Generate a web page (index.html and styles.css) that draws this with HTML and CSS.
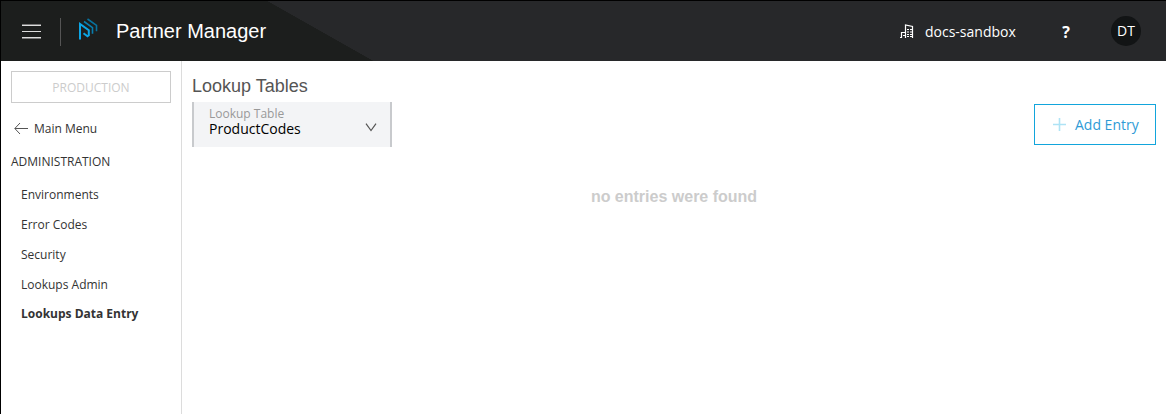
FILE: index.html
```html
<!DOCTYPE html>
<html lang="en">
<head>
<meta charset="utf-8">
<title>Partner Manager</title>
<link rel="stylesheet" href="styles.css">
</head>
<body>
<div class="app">
  <header class="header">
    <svg class="menu" width="19" height="15" viewBox="0 0 19 15" shape-rendering="crispEdges"><path d="M0 0h19v1H0zM0 7h19v1H0zM0 14h19v1H0z" fill="#777"/><path d="M0 1h19v1H0zM0 7h19v1H0zM0 13h19v1H0z" fill="#ddd"/></svg>
    <span class="divider"></span>
    <svg class="logo" width="20" height="23" viewBox="0 0 20 23" fill="none" stroke-width="1.6"><path d="M2 21.500V6L10.800 12.300V17.300L9.500 18.200 5.500 15.200" stroke="#0ca5e5" stroke-width="2"/><path d="M6 3.500l8.500 6.200v6" stroke="#087eae"/><path d="M9.500 1l9 6.400v5.800" stroke="#08729e"/></svg>
    <h1 class="brand">Partner Manager</h1>
    <svg class="building" width="14" height="15" viewBox="0 0 14 15" fill="none" stroke="#fff"><path d="M1.500 14V8.500H5M5.500 14V1L12.500 2.500V14M0 13.500H2" stroke-width="1.200"/><path d="M7 5.500h2M10 5.500h2M7 8h2M10 8h2M7 10.500h2M10 10.500h2M3 11.500h2M7 12.500h2M10 12.500h2"/></svg>
    <span class="org">docs-sandbox</span>
    <span class="help">?</span>
    <span class="avatar">DT</span>
  </header>
  <div class="body">
    <nav class="sidebar">
      <div class="environment">PRODUCTION</div>
      <a class="back"><svg width="14" height="12" viewBox="0 0 14 12" fill="none" stroke="#555"><path d="M14 5.500H1M6 0L.8 5.500 6 11"/></svg><span>Main Menu</span></a>
      <div class="section">ADMINISTRATION</div>
      <ul class="links">
        <li>Environments</li>
        <li>Error Codes</li>
        <li>Security</li>
        <li>Lookups Admin</li>
        <li class="current">Lookups Data Entry</li>
      </ul>
    </nav>
    <main class="main">
      <h2 class="title">Lookup Tables</h2>
      <div class="toolbar">
        <div class="select">
          <div class="field"><span class="label">Lookup Table</span><span class="value">ProductCodes</span></div>
          <svg width="12" height="9" viewBox="0 0 12 9" fill="none" stroke="#555" stroke-width="1.2"><path d="M1 .7L6 7.500 11 .7"/></svg>
        </div>
        <button class="add"><svg width="13" height="13" viewBox="0 0 13 13" stroke="#aee3f5" stroke-width="1.6"><path d="M6.500 0v13M0 6.500h13"/></svg><span>Add Entry</span></button>
      </div>
      <p class="empty">no entries were found</p>
    </main>
  </div>
</div>
</body>
</html>
```
FILE: styles.css
```css
* { box-sizing: border-box; }
body { margin: 0; background: #fff; font-family: "Open Sans", "Noto Sans", sans-serif; }
.app { display: flex; flex-direction: column; height: 414px; border-top: 1px solid #000; border-left: 1px solid #000; overflow: hidden; }
.header { display: flex; align-items: center; flex: none; height: 60px; padding: 0 25px 0 21px; color: #fff; background: linear-gradient(to top right, #1c1e1d 50%, #27282a 50.4%) 266px 0 / 106px 60px no-repeat, linear-gradient(to right, #1c1e1d 266px, #27282a 266px); }
.menu { margin-top: 1px; }
.divider { width: 1px; height: 28px; margin: 2px 0 0 19px; background: #555; }
.logo { margin: -4px 0 0 17px; }
.brand { margin: 0 0 0 18px; font: 400 20px/24px "Liberation Sans", Arial, sans-serif; }
.building { margin: 1px 0 0 auto; }
.org { margin-left: 11px; width: 91px; font-size: 14px; line-height: 20px; margin-top: 2px; white-space: nowrap; }
.help { width: 12px; margin: 2px 0 0 44px; text-align: center; font-size: 16px; font-weight: 700; line-height: 20px; }
.avatar { width: 30px; height: 30px; margin-left: 39px; border-radius: 50%; background: #121415; text-align: center; font-size: 14px; line-height: 30px; }
.body { display: flex; flex: 1; }
.sidebar { width: 181px; padding: 10px; border-right: 1px solid #dcdcdc; color: #333; font-size: 12px; }
.environment { height: 32px; border: 1px solid #ccc; color: #ccc; line-height: 31px; text-align: center; }
.back { display: flex; align-items: center; gap: 6px; margin: 18px 0 0 3px; line-height: 16px; }
.section { margin-top: 17px; line-height: 16px; }
.links { margin: 10px 0 0; padding: 0 0 0 10px; list-style: none; line-height: 30px; }
.current { font-weight: 700; line-height: 28px; }
.main { flex: 1; padding: 13px 10px 0; }
.title { margin: 0; color: #555; font: 400 18px/24px "Liberation Sans", Arial, sans-serif; }
.toolbar { display: flex; justify-content: space-between; margin-top: 4px; }
.select { display: flex; justify-content: space-between; align-items: center; width: 200px; height: 45px; padding: 0 13px 0 15px; border: solid #c8cacd; border-width: 0 2px; background: #f3f4f6; }
.select svg { margin-top: 6px; }
.field { display: flex; flex-direction: column; margin-top: -6px; }
.label { color: #999; font-size: 12px; line-height: 15px; }
.value { color: #000; font-size: 14px; line-height: 16px; }
.add { display: flex; align-items: center; width: 122px; height: 41px; margin-top: 2px; padding: 0 0 0 18px; gap: 9px; border: 1px solid #12a5dc; background: #fff; color: #2e9bd6; font: 14px/20px "Open Sans", sans-serif; }
.empty { margin: 40px 0 0; color: #ccc; text-align: center; font: 700 16px/20px "Liberation Sans", Arial, sans-serif; }
```
